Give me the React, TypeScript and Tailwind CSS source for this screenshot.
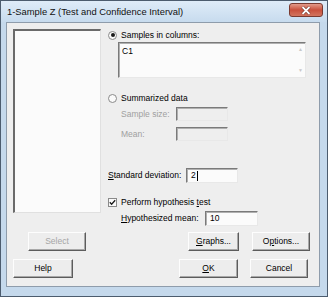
import React from "react";

const font = "font-['Liberation_Sans',Arial,sans-serif]";

function Btn({ children, w, ml, disabled }: { children: React.ReactNode; w: string; ml?: string; disabled?: boolean }) {
  return (
    <div
      className={`${w} ${ml ?? ""} h-[19px] flex items-center justify-center whitespace-nowrap bg-[#ededed] border border-t-[#fdfdfd] border-l-[#fdfdfd] border-r-[#5c5c5c] border-b-[#5c5c5c] shadow-[inset_-1px_-1px_0_#a8a8a8] text-[8.5px] ${disabled ? "text-[#a6a6a6]" : "text-black"}`}
    >
      {children}
    </div>
  );
}

function Field({ w, h, disabled, children }: { w: string; h: string; disabled?: boolean; children?: React.ReactNode }) {
  return (
    <div
      className={`${w} ${h} shrink-0 border border-t-[#7a7a7a] border-l-[#7a7a7a] border-r-[#e8e8e8] border-b-[#e8e8e8] shadow-[inset_1px_1px_0_#b0b0b0] ${disabled ? "bg-[#eeeeee]" : "bg-[#fbfbfb]"} flex items-center pl-[4px] text-[8.5px]`}
    >
      {children}
    </div>
  );
}

function Radio({ checked }: { checked?: boolean }) {
  return (
    <div className="w-[9px] h-[9px] rounded-full border border-[#8a8a8a] bg-[#fafafa] flex items-center justify-center shrink-0">
      {checked && <div className="w-[4px] h-[4px] rounded-full bg-[#1a1a1a]" />}
    </div>
  );
}

export default function App() {
  return (
    <div className={`w-[328px] h-[297px] bg-[#c5d9ec] border border-[#4c5c6e] flex flex-col ${font} text-black overflow-hidden`}>
      <div className="h-[21px] shrink-0 flex items-center justify-between pl-[6px] pr-[4px] bg-gradient-to-b from-[#dfecf8] to-[#c7dbee]">
        <span className="text-[9.4px] text-[#111] mt-[1px] whitespace-nowrap">1-Sample Z (Test and Confidence Interval)</span>
        <div className="w-[34px] h-[14px] rounded-[3px] border border-[#7a3a30] bg-gradient-to-b from-[#e29a8a] via-[#c9503c] to-[#d2745e] flex items-center justify-center mb-[3px]">
          <svg width="10" height="9" viewBox="0 0 10 9">
            <path d="M1.5 1 L8.5 8 M8.5 1 L1.5 8" stroke="#6a2a20" strokeWidth="3" />
            <path d="M1.5 1 L8.5 8 M8.5 1 L1.5 8" stroke="#ffffff" strokeWidth="1.8" />
          </svg>
        </div>
      </div>
      <div className="h-[265px] ml-[5px] mr-[7px] bg-[#eeeeee] border border-[#8e9cab] pl-[6px] pt-[6px] flex flex-col">
        <div className="flex">
          <div className="w-[88px] h-[184px] bg-[#fbfbfb] border-t-2 border-l-2 border-t-[#6a6a6a] border-l-[#6a6a6a] border-r border-b border-r-[#e0e0e0] border-b-[#e0e0e0]" />
          <div className="ml-[7px] flex flex-col text-[8.5px] whitespace-nowrap">
            <div className="h-[12px] flex items-center gap-[4px]">
              <Radio checked />
              <span>Samples in columns:</span>
            </div>
            <div className="mt-[1px] ml-[10px] w-[188px] h-[36px] bg-[#fbfbfb] border border-t-[#7a7a7a] border-l-[#7a7a7a] border-r-[#e8e8e8] border-b-[#e8e8e8] shadow-[inset_1px_1px_0_#b0b0b0] flex">
              <div className="flex-1 pl-[3px] pt-[3px] text-[8.5px] leading-[10px]">C1</div>
              <div className="w-[9px] flex flex-col justify-between items-center py-[4px] text-[#c8c8c8] text-[5px] leading-[5px]">
                <span>▲</span>
                <span>▼</span>
              </div>
            </div>
            <div className="mt-[14px] h-[12px] flex items-center gap-[4px]">
              <Radio />
              <span>Summarized data</span>
            </div>
            <div className="mt-[3px] ml-[13px] h-[14px] flex items-center">
              <span className="w-[55px] text-[#a0a0a0]">Sample size:</span>
              <Field w="w-[52px]" h="h-[14px]" disabled />
            </div>
            <div className="mt-[6px] ml-[13px] h-[14px] flex items-center">
              <span className="w-[55px] text-[#a0a0a0]">Mean:</span>
              <Field w="w-[52px]" h="h-[14px]" disabled />
            </div>
            <div className="mt-[27px] h-[15px] flex items-center">
              <span className="w-[78px]">
                <span className="underline">S</span>tandard deviation:
              </span>
              <Field w="w-[52px]" h="h-[15px]">
                <span>2</span>
                <span className="w-px h-[10px] bg-black ml-[1px]" />
              </Field>
            </div>
            <div className="mt-[13px] h-[12px] flex items-center gap-[4px]">
              <div className="w-[9px] h-[9px] border border-[#8a8a8a] bg-[#fafafa] flex items-center justify-center shrink-0">
                <svg width="7" height="7" viewBox="0 0 7 7">
                  <path d="M0.8 3.3 L2.6 5.2 L6.2 1.2" stroke="#1a1a1a" strokeWidth="1.3" fill="none" />
                </svg>
              </div>
              <span>
                Perform hypothesis <span className="underline">t</span>est
              </span>
            </div>
            <div className="mt-[3px] ml-[13px] h-[15px] flex items-center">
              <span className="w-[84px]">
                <span className="underline">H</span>ypothesized mean:
              </span>
              <Field w="w-[53px]" h="h-[15px]">
                <span>10</span>
              </Field>
            </div>
          </div>
        </div>
        <div className="mt-[6px] flex">
          <Btn w="w-[58px]" ml="ml-[15px]" disabled>
            Select
          </Btn>
          <Btn w="w-[51px]" ml="ml-[102px]">
            <span>
              <span className="underline">G</span>raphs...
            </span>
          </Btn>
          <Btn w="w-[58px]" ml="ml-[13px]">
            <span>
              O<span className="underline">p</span>tions...
            </span>
          </Btn>
        </div>
        <div className="mt-[8px] flex">
          <Btn w="w-[60px]">Help</Btn>
          <Btn w="w-[59px]" ml="ml-[106px]">
            <span>
              <span className="underline">O</span>K
            </span>
          </Btn>
          <Btn w="w-[58px]" ml="ml-[12px]">
            Cancel
          </Btn>
        </div>
      </div>
    </div>
  );
}
